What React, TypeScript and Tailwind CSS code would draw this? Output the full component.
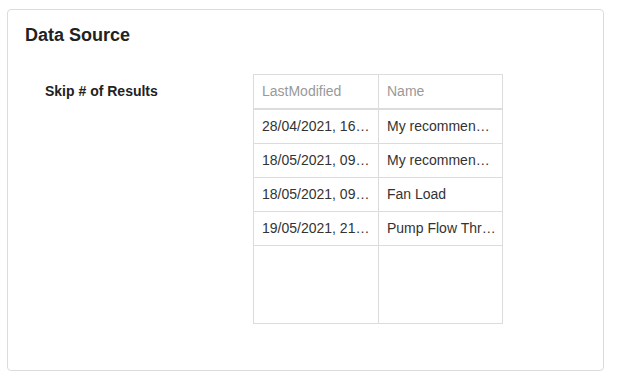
import React from "react";

const rows = [
  ["28/04/2021, 16\u2026", "My recommen\u2026"],
  ["18/05/2021, 09\u2026", "My recommen\u2026"],
  ["18/05/2021, 09\u2026", "Fan Load"],
  ["19/05/2021, 21\u2026", "Pump Flow Thr\u2026"],
];

export default function App() {
  return (
    <div className="w-[619px] h-[379px] bg-white" style={{ fontFamily: '"Liberation Sans", Arial, sans-serif' }}>
      <div className="absolute left-[7px] top-[9px] w-[597px] h-[362px] border border-[#dcdcdc] rounded-[4px] bg-white">
        <div className="pl-[17px] pt-[14px] text-[18px] font-bold text-[#222] leading-[22px]">Data Source</div>
        <div className="flex mt-[28px]">
          <div className="w-[245px] pl-[37px] pt-[9px] text-[14px] font-bold text-[#222] leading-[16px]">Skip # of Results</div>
          <div className="w-[250px] border border-[#dcdcdc] text-[14px]">
            <div className="flex h-[35px] border-b-2 border-[#dcdcdc] text-[#999]">
              <div className="w-[125px] border-r border-[#dcdcdc] pl-[8px] flex items-center">LastModified</div>
              <div className="flex-1 pl-[8px] flex items-center">Name</div>
            </div>
            {rows.map((r, i) => (
              <div key={i} className="flex h-[34px] border-b border-[#dcdcdc] text-[#333]">
                <div className="w-[125px] border-r border-[#dcdcdc] pl-[8px] flex items-center whitespace-nowrap">{r[0]}</div>
                <div className="flex-1 pl-[8px] flex items-center whitespace-nowrap">{r[1]}</div>
              </div>
            ))}
            <div className="flex h-[77px]">
              <div className="w-[125px] border-r border-[#dcdcdc]"></div>
              <div className="flex-1"></div>
            </div>
          </div>
        </div>
      </div>
    </div>
  );
}
